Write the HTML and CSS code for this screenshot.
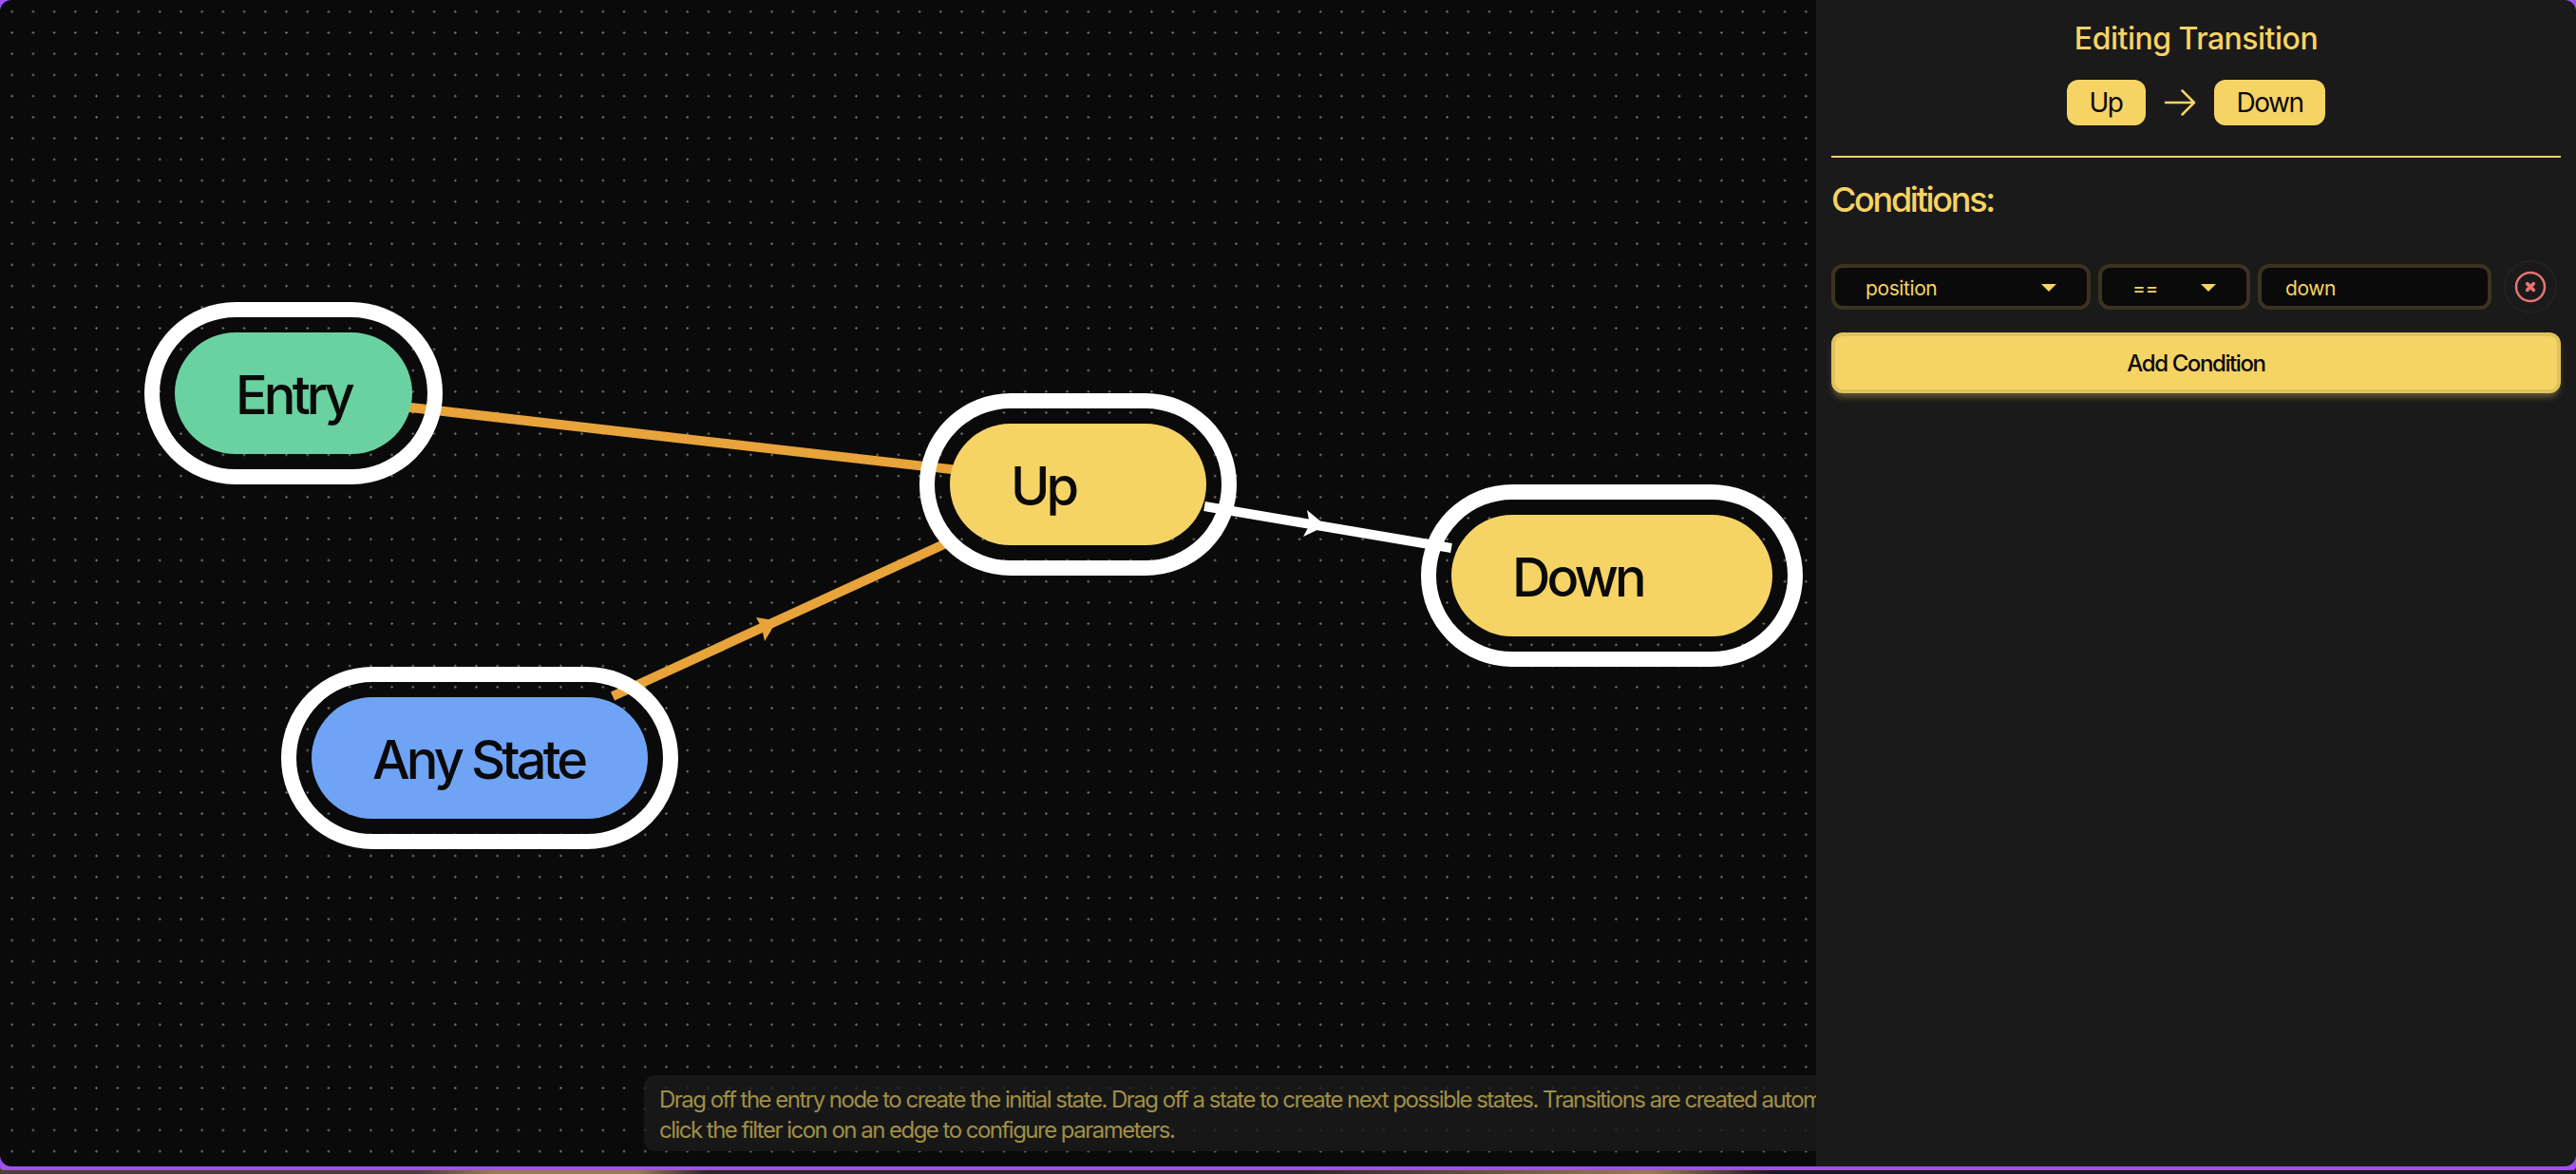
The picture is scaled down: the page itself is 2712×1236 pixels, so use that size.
FILE: index.html
```html
<!DOCTYPE html>
<html lang="en">
<head>
<meta charset="utf-8">
<title>Editing Transition</title>
<link rel="stylesheet" href="styles.css">
</head>
<body>
<div class="frame">
  <div class="app">
    <main class="canvas">
      <svg class="edges" width="1912" height="1228" viewBox="0 0 1912 1228" aria-hidden="true">
        <line class="edge edge-orange" x1="430" y1="428.7" x2="1004" y2="494.4"/>
        <line class="edge edge-orange" x1="645" y1="733" x2="996" y2="572"/>
        <polygon class="head-orange" points="818,653.5 796,650 802,661 805,675"/>
        <line class="edge edge-white" x1="1268" y1="533" x2="1528" y2="577"/>
        <polygon class="head-white" points="1396,553.5 1376,537 1379,552 1372,565"/>
      </svg>

      <div class="node node-entry" style="left:184px;top:350px;width:250px"><span>Entry</span></div>
      <div class="node node-state" style="left:1000px;top:446px;width:270px"><span>Up</span></div>
      <div class="node node-state" style="left:1528px;top:542px;width:338px"><span>Down</span></div>
      <div class="node node-any" style="left:328px;top:734px;width:354px"><span>Any State</span></div>

      <div class="hint">Drag off the entry node to create the initial state. Drag off a state to create next possible states. Transitions are created automatically; to edit one,<br>click the filter icon on an edge to configure parameters.</div>
    </main>

    <aside class="panel">
      <header class="panel-head">
        <h2 class="panel-title">Editing Transition</h2>
        <div class="route">
          <span class="route-pill">Up</span>
          <svg class="route-arrow" viewBox="0 0 24 24" fill="none" stroke="currentColor" stroke-width="1.5" stroke-linecap="round" stroke-linejoin="round" aria-hidden="true">
            <path d="M13.5 4.5 21 12l-7.5 7.5M21 12H3"/>
          </svg>
          <span class="route-pill">Down</span>
        </div>
      </header>

      <h3 class="section-title">Conditions:</h3>

      <div class="condition">
        <div class="field field-param"><span>position</span><i class="caret"></i></div>
        <div class="field field-op"><span>==</span><i class="caret"></i></div>
        <div class="field field-value"><span>down</span></div>
        <button class="remove" type="button" aria-label="Remove condition">
          <svg viewBox="0 0 24 24" fill="none" stroke="currentColor" stroke-width="1.5" stroke-linecap="round" stroke-linejoin="round" aria-hidden="true">
            <circle cx="12" cy="12" r="9"/>
            <path class="remove-x" d="M10 10l4 4m0-4l-4 4"/>
          </svg>
        </button>
      </div>

      <button class="add" type="button">Add Condition</button>
    </aside>
  </div>
</div>
</body>
</html>
```
FILE: styles.css
```css
* { box-sizing: border-box; }

html, body { margin: 0; height: 100%; }

body {
  overflow: hidden;
  font-family: Inter, "Liberation Sans", sans-serif;
  background: linear-gradient(to right,
    #4a4233 0, #4a4233 440px, #9a8040 520px, #9a8040 670px, #2a2a1f 745px,
    #2a2a1f 1365px, #9a8040 1738px, #1a1a1a 1865px, #1a1a1a 100%);
}

.frame {
  height: 1232px;
  padding-bottom: 4px;
  background: #a04ff5;
  border-radius: 0 0 4px 4px;
}

.app {
  display: flex;
  height: 1228px;
  border-radius: 12px;
  overflow: hidden;
}

.canvas {
  position: relative;
  flex: 0 0 1912px;
  overflow: hidden;
  background-color: #0a0a0a;
  background-image: radial-gradient(circle, #777 0.9px, transparent 1.4px);
  background-size: 22.22px 22.22px;
  background-position: 1.6px 1.2px;
}

.edges { position: absolute; inset: 0; }

.edge { stroke-width: 10; }
.edge-orange { stroke: #e8a33a; }
.edge-white { stroke: #fff; }
.head-orange { fill: #e8a33a; }
.head-white { fill: #fff; }

.node {
  position: absolute;
  display: flex;
  align-items: center;
  height: 128px;
  padding: 0 64px;
  border-radius: 64px;
  color: #0a0a0a;
  font-size: 56px;
  font-weight: 500;
  letter-spacing: -3.9px;
  white-space: nowrap;
}

.node span { position: relative; top: 2px; }

.node::after {
  content: "";
  position: absolute;
  inset: -32px;
  border: 16px solid #fff;
  border-radius: 96px;
}

.node-entry { background: #69d2a0; }
.node-state { background: #f6d365; }
.node-any { background: #6fa3f6; }

.hint {
  position: absolute;
  left: 678px;
  top: 1132px;
  height: 80px;
  padding: 10px 16px 6px;
  border-radius: 12px;
  background: rgba(26, 26, 26, 0.8);
  color: #a08f46;
  font-size: 24px;
  line-height: 32px;
  letter-spacing: -1.52px;
  white-space: nowrap;
}

.panel {
  flex: 1;
  padding: 16px;
  background: #1a1a1a;
  color: #f6d365;
}

.panel-head {
  height: 150px;
  border-bottom: 2px solid #f6d365;
  display: flex;
  flex-direction: column;
  align-items: center;
}

.panel-title {
  margin: 5px 0 23px;
  height: 40px;
  font-size: 32px;
  line-height: 40px;
  font-weight: 500;
  letter-spacing: -0.5px;
}

.route {
  display: flex;
  align-items: center;
  gap: 16px;
}

.route-pill {
  height: 48px;
  padding: 0 24px;
  border-radius: 12px;
  background: #f6d365;
  color: #0a0a0a;
  font-size: 28px;
  line-height: 48px;
  letter-spacing: -1.5px;
}

.route-arrow { width: 40px; height: 40px; }

.section-title {
  margin: 20px 0 44px;
  height: 48px;
  font-size: 36px;
  line-height: 48px;
  font-weight: 500;
  letter-spacing: -2.3px;
}

.condition {
  display: flex;
  align-items: center;
  height: 48px;
  gap: 8px;
}

.field {
  display: flex;
  align-items: center;
  justify-content: space-between;
  height: 48px;
  padding: 2px 32px 0;
  border: 4px solid #3a3320;
  border-radius: 12px;
  background: #0a0a0a;
  font-size: 21px;
  letter-spacing: -0.4px;
}

.field-param { width: 273px; }
.field-op { width: 160px; }
.field-value { width: 246px; padding-left: 25px; }

.caret {
  width: 0;
  height: 0;
  border-left: 8px solid transparent;
  border-right: 8px solid transparent;
  border-top: 8px solid #f6d365;
}

.remove {
  flex: none;
  width: 56px;
  height: 56px;
  margin-left: 5px;
  padding: 0;
  display: flex;
  align-items: center;
  justify-content: center;
  border: 2px solid #222;
  border-radius: 50%;
  background: #1a1a1a;
  color: #e57373;
}

.remove svg { width: 40px; height: 40px; }
.remove-x { stroke-width: 2.2; }

.add {
  display: block;
  width: 100%;
  height: 64px;
  margin-top: 24px;
  border: 4px solid #e0c25c;
  border-radius: 12px;
  background: #f6d365;
  box-shadow: 0 6px 7px -2px rgba(246, 211, 101, 0.35);
  color: #0a0a0a;
  font-family: inherit;
  font-size: 24px;
  font-weight: 500;
  letter-spacing: -1.4px;
}
```
